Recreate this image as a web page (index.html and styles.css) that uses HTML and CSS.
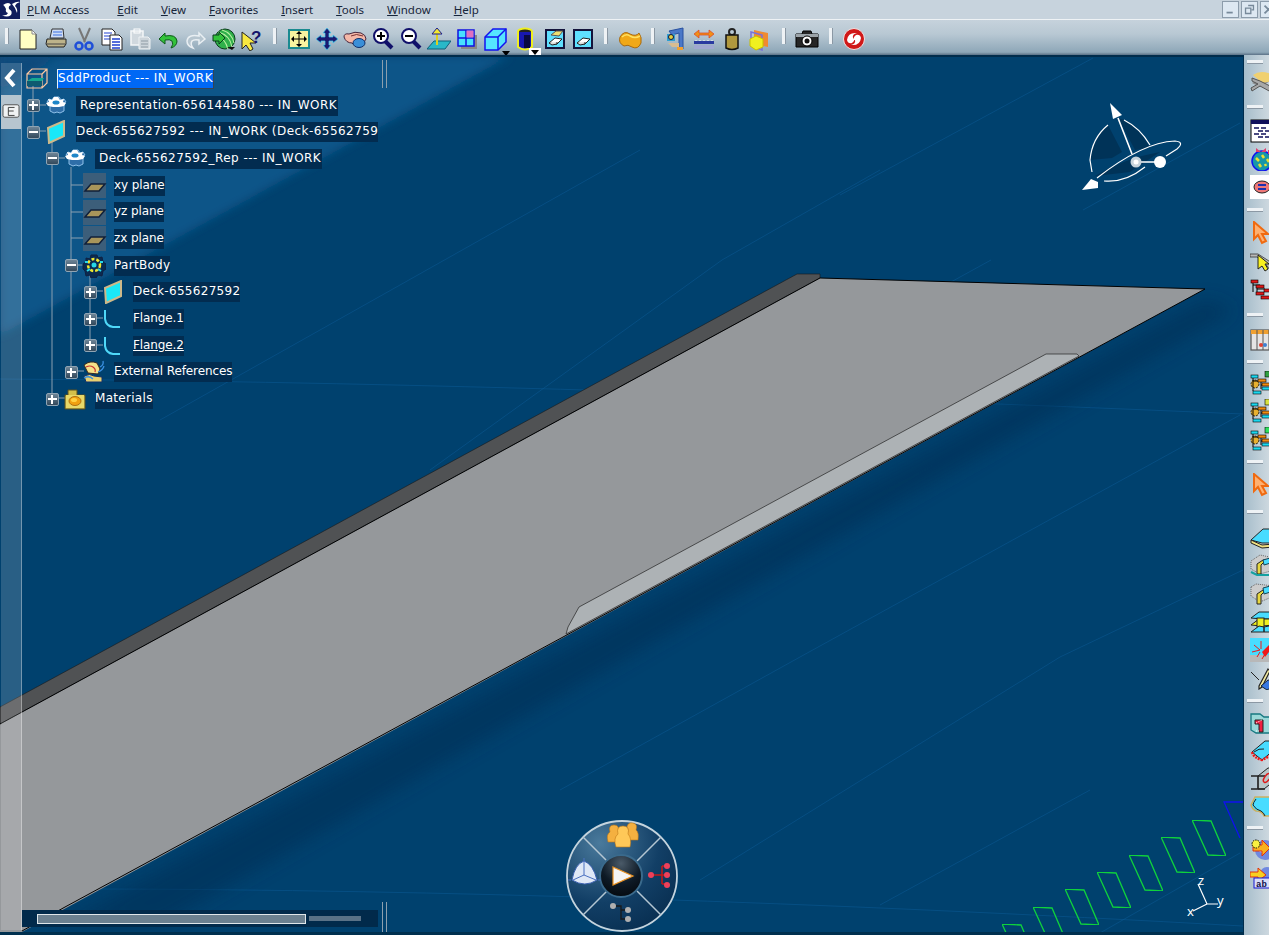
FILE: index.html
```html
<!DOCTYPE html>
<html lang="en">
<head>
  <meta charset="UTF-8" />
  <title>CATIA V6 - SddProduct</title>
  <link rel="stylesheet" href="styles.css">
</head>
<body>

  <!-- shared icons -->
  <svg class="defs" xmlns="http://www.w3.org/2000/svg">
    <symbol id="i-arrow" viewBox="0 0 24 24"><path d="M4 1v17l4-4 4 8 4-2-4-7h6z" fill="#ffb070" stroke="#f06a10" stroke-width="2"/></symbol>
    <symbol id="i-hide" viewBox="0 0 24 24"><rect x="3" y="3" width="18" height="18" fill="#5fe0ff" stroke="#14143c" stroke-width="2"/><path d="M6 16l6-5 7 1-5 5z" fill="#fff" stroke="#222"/><path d="M6 16l3 2 5-1v-2" fill="#ddd" stroke="#222"/></symbol>
    <symbol id="i-tree" viewBox="0 0 24 24"><circle cx="5" cy="13" r="4" fill="#e8b030" stroke="#222" stroke-dasharray="2 1"/><path d="M3 6v14M3 10h8M11 10v8M11 14h8" stroke="#000" fill="none"/><rect x="1" y="4" width="7" height="3" fill="#19d8f0" stroke="#000" stroke-width=".6"/><rect x="8" y="8" width="8" height="3" fill="#f08a10" stroke="#000" stroke-width=".6"/><rect x="12" y="12" width="8" height="3" fill="#f08a10" stroke="#000" stroke-width=".6"/><rect x="12" y="16" width="8" height="3" fill="#19d8f0" stroke="#000" stroke-width=".6"/><rect x="3" y="20" width="8" height="3" fill="#19d8f0" stroke="#000" stroke-width=".6"/></symbol>
    <symbol id="i-rep" viewBox="0 0 24 24"><path d="M3 8l3 1v8l4 2 3-1 3 1 4-2V9l2-1-2-3-3 1-2-3h-5L8 6 5 5z" fill="#2f6ea8" stroke="#8fc0e8"/><path d="M2 9l3-1-1-3 4 1 2-3h4l2 3 4-1-1 3 3 1-2 3-5 1h-6l-5-1z" fill="#fff"/><ellipse cx="12" cy="8.5" rx="3.5" ry="2" fill="#1f86c8"/></symbol>
    <symbol id="i-deck" viewBox="0 0 24 24"><path d="M4 8L20 1v15L5 23z" fill="#19e8f8" stroke="#cdb98a" stroke-width="2"/></symbol>
    <symbol id="i-flange" viewBox="0 0 24 24"><path d="M4 3v9q1 7 8 8h7" fill="none" stroke="#4fd8f8" stroke-width="2"/></symbol>
    <symbol id="i-plane" viewBox="0 0 24 24"><path d="M2 17l6-7h14l-6 7z" fill="#a8955a" stroke="#10203a" stroke-width="1.5"/></symbol>
    <symbol id="i-rect" viewBox="0 0 34 36"><path d="M0 0l19 1 15 35-18-1z" fill="none" stroke="#0fd23c" stroke-width="1.3"/></symbol>
  </svg>

  <div class="app">
    <div class="menubar">
      <svg class="logo" viewBox="0 0 20 19"><rect width="20" height="19" fill="#101c5c"/><path d="M3 5q6-4 8 0-3 1-2 4 4 2 2 6-4 3-9 0 5 1 6-2-3-1-2-4-2-4-3-4zM12 4q5-3 8-2-4 1-5 4 3 3 2 7-2-6-5-9z" fill="#fff"/></svg>
      <nav class="menus">
        <span><u>P</u>LM Access</span>
        <span><u>E</u>dit</span>
        <span><u>V</u>iew</span>
        <span><u>F</u>avorites</span>
        <span><u>I</u>nsert</span>
        <span><u>T</u>ools</span>
        <span><u>W</u>indow</span>
        <span><u>H</u>elp</span>
      </nav>
      <div class="winbtns">
        <span class="winbtn"><svg viewBox="0 0 17 17"><rect x="4" y="11" width="7" height="2" fill="#77899a"/></svg></span>
        <span class="winbtn"><svg viewBox="0 0 17 17"><path d="M7 4h6v5h-2M4 7h6v6H4z" fill="none" stroke="#77899a" stroke-width="1.5"/></svg></span>
        <span class="winbtn"><svg viewBox="0 0 17 17"><path d="M4 4l9 9M13 4l-9 9" stroke="#77899a" stroke-width="2"/></svg></span>
      </div>
    </div>

    <div class="toolbar">
      <span class="grip first"></span>
      <span class="tool"><svg viewBox="0 0 24 24"><path d="M4 3h12l4 4v15H4z" fill="#ffffc4" stroke="#222"/><path d="M16 3v4h4z" fill="#fff" stroke="#888"/></svg></span>
      <span class="tool"><svg viewBox="0 0 24 24"><path d="M8 2h11l1 9H6z" fill="#cfdcf5" stroke="#333"/><path d="M9 5h9M9 8h9" stroke="#3a6fe0"/><path d="M3 12h19v5l-2 3H4l-2-3z" fill="#bdb38a" stroke="#222"/><path d="M3 17h18" stroke="#444"/></svg></span>
      <span class="tool"><svg viewBox="0 0 24 24"><path d="M7 1l6 14M18 1l-6 14" stroke="#777" stroke-width="2"/><circle cx="7" cy="19" r="3.5" fill="none" stroke="#1f4fd8" stroke-width="2.5"/><circle cx="17" cy="19" r="3.5" fill="none" stroke="#1f4fd8" stroke-width="2.5"/></svg></span>
      <span class="tool"><svg viewBox="0 0 24 24"><path d="M2 2h10l3 3v13H2z" fill="#fff" stroke="#222"/><path d="M4 6h8M4 9h8M4 12h8" stroke="#2040d0"/><path d="M10 8h9l3 3v12H10z" fill="#fff" stroke="#222"/><path d="M12 12h8M12 15h8M12 18h8M12 21h8" stroke="#2040d0" stroke-width="1.3"/></svg></span>
      <span class="tool"><svg viewBox="0 0 24 24"><path d="M3 4h12v14H3z" fill="#d0d8de" stroke="#f4f6f8" stroke-width="1.5"/><rect x="6" y="2" width="6" height="4" fill="none" stroke="#fff"/><path d="M11 10h9l2 2v10H11z" fill="#ccd4da" stroke="#eef2f4"/><path d="M13 14h7M13 17h7M13 20h7" stroke="#8d9aa4"/></svg></span>
      <span class="tool"><svg viewBox="0 0 24 24"><path d="M3 12l6-6v3q11-2 12 5 0 5-6 7 3-4 1-7-2-2-7-1v4z" fill="#33c23a" stroke="#0f5a1a"/></svg></span>
      <span class="tool"><svg viewBox="0 0 24 24"><path d="M21 12l-6-6v3Q4 7 3 14q0 5 6 7-3-4-1-7 2-2 7-1v4z" fill="#b6c5cf" stroke="#e9eff3" stroke-width="1.5"/></svg></span>
      <span class="tool"><svg viewBox="0 0 24 24"><circle cx="13" cy="12" r="10" fill="#2fb04a" stroke="#0b3d1c"/><path d="M6 5q12 3 14 15M10 3q10 3 12 13M4 9q9 2 12 13" fill="none" stroke="#b8f0a0" stroke-width="1.2"/><path d="M1 8h6v-3l6 6-6 6v-3H1z" fill="#33c23a" stroke="#0b3d1c"/><path d="M15 20l5 3 3-3" fill="#111"/></svg></span>
      <span class="tool"><svg viewBox="0 0 24 24"><path d="M2 5v17l4-4 4 6 3-2-3-6h6z" fill="#f8e840" stroke="#222"/><text x="11" y="16" class="qmark">?</text></svg></span>
      <span class="grip"></span>
      <span class="tool"><svg viewBox="0 0 24 24"><rect x="2" y="3" width="20" height="18" fill="#f8f4a0" stroke="#1a8a90" stroke-width="2"/><path d="M12 5v14M5 12h14" stroke="#000"/><path d="M12 4l-3 3h6zM12 20l-3-3h6zM4 12l3-3v6zM20 12l-3-3v6z"/></svg></span>
      <span class="tool"><svg viewBox="0 0 24 24"><path d="M12 1l4 5h-2v4h4V8l5 4-5 4v-2h-4v4h2l-4 5-4-5h2v-4H6v2l-5-4 5-4v2h4V6H8z" fill="#1a1a70" stroke="#40d0f0" stroke-width=".7"/></svg></span>
      <span class="tool"><svg viewBox="0 0 24 24"><path d="M1 10q0-4 5-3 6-3 12-1 5 2 5 6l-4 6q-7 2-10-2-6 0-8-6z" fill="#f4b8a8" stroke="#43243c"/><path d="M8 9q5-3 12 0" fill="none" stroke="#7a3030"/><ellipse cx="16" cy="16" rx="6" ry="4.5" fill="#3a8fd8" stroke="#10306a"/></svg></span>
      <span class="tool"><svg viewBox="0 0 24 24"><path d="M14 14l7 7" stroke="#10106a" stroke-width="4"/><circle cx="10" cy="9" r="7" fill="#fff" stroke="#10106a" stroke-width="2"/><path d="M6 9h8M10 5v8" stroke="#000" stroke-width="2"/></svg></span>
      <span class="tool"><svg viewBox="0 0 24 24"><path d="M14 14l7 7" stroke="#10106a" stroke-width="4"/><circle cx="10" cy="9" r="7" fill="#fff" stroke="#10106a" stroke-width="2"/><path d="M6 9h8" stroke="#000" stroke-width="2"/></svg></span>
      <span class="tool"><svg viewBox="0 0 24 24"><path d="M0 22l7-8h17l-6 8z" fill="#29b8c8" stroke="#11607a"/><path d="M10 18V5" stroke="#ddd020" stroke-width="2"/><path d="M10 1l-5 6h10z" fill="#f4ea30" stroke="#1a1a90"/></svg></span>
      <span class="tool"><svg viewBox="0 0 24 24"><rect x="6" y="8" width="16" height="14" fill="#888"/><rect x="3" y="3" width="16" height="16" fill="#48e0ff" stroke="#1010e0" stroke-width="1.5"/><path d="M11 3v16M3 11h16" stroke="#1010e0" stroke-width="1.5"/><rect x="11.5" y="3.5" width="7" height="7" fill="#e070c0"/></svg></span>
      <span class="tool has-drop"><svg viewBox="0 0 24 24"><path d="M2 10l8-8h13v13l-8 8H2z" fill="#55e4ff" stroke="#1212f0" stroke-width="1.5"/><path d="M2 10h13v13M15 10l8-8" fill="none" stroke="#1212f0" stroke-width="1.5"/></svg><i class="drop"></i></span>
      <span class="tool has-drop"><svg viewBox="0 0 24 24"><ellipse cx="12" cy="4.5" rx="7" ry="3" fill="#222" stroke="#f0f020" stroke-width="2"/><path d="M5 5v15q7 5 14 0V5" fill="#1818b0" stroke="#f0f020" stroke-width="2"/><rect x="11" y="8" width="6" height="13" fill="#0a0a40"/></svg><i class="drop boxed"></i></span>
      <span class="tool"><svg viewBox="0 0 24 24"><use href="#i-hide" width="24" height="24"/><path d="M8 8l5-4h7l-4 5z" fill="#f0e070" stroke="#555"/></svg></span>
      <span class="tool"><svg viewBox="0 0 24 24"><use href="#i-hide" width="24" height="24"/></svg></span>
      <span class="grip"></span>
      <span class="tool"><svg viewBox="0 0 24 24"><path d="M2 10q4-7 10-3 6 3 9-1 3 4 2 10-3 7-9 4-4-3-8-1-6-3-4-9z" fill="#f0a818" stroke="#a86a10"/><path d="M4 10q4-4 8-1 5 3 10 0" fill="none" stroke="#ffe060" stroke-width="1.5"/></svg></span>
      <span class="grip"></span>
      <span class="tool"><svg viewBox="0 0 24 24"><path d="M5 4l14-3v21h-4V6l-7 2z" fill="#4a78c8" stroke="#2850a0"/><rect x="3" y="7" width="8" height="7" fill="#2f9fd0"/><circle cx="7" cy="10" r="2.5" fill="#e0d040" stroke="#114"/><path d="M4 16h11v4H8z" fill="#d8bc90"/><rect x="13" y="20" width="6" height="3" fill="#f0a030"/></svg></span>
      <span class="tool"><svg viewBox="0 0 24 24"><path d="M2 7l5-4v3h10V3l5 4-5 4V8H7v3z" fill="#f09018" stroke="#e04020" stroke-width=".7"/><rect x="2" y="14" width="20" height="3" fill="#2a3aa0"/><path d="M4 14v-1M8 14v-1M12 14v-1M16 14v-1M20 14v-1" stroke="#fff"/><rect x="2" y="18" width="20" height="4" fill="#a0a8d0"/></svg></span>
      <span class="tool"><svg viewBox="0 0 24 24"><circle cx="12" cy="5" r="3" fill="none" stroke="#222" stroke-width="2"/><path d="M6 8h12v13q-6 3-12 0z" fill="#b0983e" stroke="#111" stroke-width="1.5"/></svg></span>
      <span class="tool"><svg viewBox="0 0 24 24"><path d="M6 3l14 3v14l-14-3z" fill="#f08a30"/><path d="M3 5l11 3v15L3 19z" fill="none" stroke="#7a70d8" stroke-width="1.5"/><path d="M2 12l6-3 7 3v8l-7 3-6-4z" fill="#f0f020" stroke="#c8c000"/></svg></span>
      <span class="grip"></span>
      <span class="tool"><svg viewBox="0 0 24 24"><path d="M1 7h6l1-3h8l1 3h6v13H1z" fill="#262626" stroke="#000"/><rect x="1" y="7" width="22" height="3" fill="#9ba3a8"/><circle cx="12" cy="14" r="5" fill="#fff" stroke="#000"/><circle cx="12" cy="14" r="2.5" fill="#111"/></svg></span>
      <span class="grip"></span>
      <span class="tool"><svg viewBox="0 0 24 24"><circle cx="12" cy="12" r="10.5" fill="#d01818" stroke="#f0e0e0"/><path d="M5 13q1-8 10-7-5 1-4 5 3 2-1 5-4 1-5-3zM19 11q-1 8-10 7 5-1 4-5-3-2 1-5 4-1 5 3z" fill="#fff"/></svg></span>
    </div>

    <div class="workspace">
      <div class="viewport">
        <!-- 3D scene, in page coordinates -->
        <svg class="scene" viewBox="0 55 1243 880">
          <defs>
            <filter id="soft" x="-20%" y="-20%" width="140%" height="140%"><feGaussianBlur stdDeviation="9"/></filter>
            <filter id="softer" x="-20%" y="-20%" width="140%" height="140%"><feGaussianBlur stdDeviation="4"/></filter>
            <radialGradient id="wheel" cx=".3" cy=".2" r=".9"><stop offset="0" stop-color="#4a7a9c"/><stop offset=".6" stop-color="#123f66"/><stop offset="1" stop-color="#082e50"/></radialGradient>
            <radialGradient id="hub" cx=".5" cy=".2" r=".8"><stop offset="0" stop-color="#4a5a68"/><stop offset=".6" stop-color="#0e1a26"/><stop offset="1" stop-color="#050a10"/></radialGradient>
          </defs>
          <rect y="55" width="1243" height="880" fill="#00416e"/>
          <path d="M0 56H510L0 335z" fill="#0c5488" filter="url(#softer)"/>
          <path d="M0 56H60L0 90z" fill="#0a4a7a" filter="url(#softer)"/>

          <g class="faint">
            <path d="M0 379Q500 382 1243 414"/>
            <path d="M100 889Q600 890 1243 926"/>
            <path d="M430 470L722 260M722 260L880 170"/>
            <path d="M160 420L640 150"/>
            <path d="M1093 58L840 195"/>
            <path d="M991 260L700 420"/>
            <path d="M1240 415L800 657L560 790"/>
            <path d="M1243 570L1060 657L700 880"/>
            <path d="M1240 123L1083 210"/>
            <path d="M1090 790L880 905"/>
            <path d="M1240 853L1100 933"/>
          </g>

          <path d="M1205 300L1235 310L160 925L60 925z" fill="#002f55" opacity=".55" filter="url(#soft)"/>

          <path d="M0 707L797 274H820V278L0 724z" fill="#505254" stroke="#1a1a1a" stroke-width=".6"/>
          <path d="M0 724L820 278L1205 289L22 932H0z" fill="#95989b"/>
          <path d="M0 724L820 278M820 278L1205 289L65 907" fill="none" stroke="#000"/>
          <path d="M566 634L568 627L579 607L1046 354H1077L1079 356z" fill="#adb2b5" stroke="#222" stroke-width=".7"/>
          <path d="M22 931L65 907" stroke="#000"/>

          <path d="M33 86V131M52 140V398M71 167V371M90 275V345" class="branch"/>
          <path d="M39 105H46M39 131H46M58 158H65M71 185H83M71 212H83M71 238H83M77 265H84M96 291H103M96 318H103M96 345H103M77 371H84M58 398H65" class="branch"/>

          <g class="gridmarks">
            <use href="#i-rect" x="1192" y="820" width="34" height="36"/>
            <use href="#i-rect" x="1161" y="837" width="34" height="36"/>
            <use href="#i-rect" x="1129" y="855" width="34" height="36"/>
            <use href="#i-rect" x="1097" y="872" width="34" height="36"/>
            <use href="#i-rect" x="1065" y="889" width="34" height="36"/>
            <use href="#i-rect" x="1033" y="907" width="34" height="36"/>
            <use href="#i-rect" x="1002" y="924" width="34" height="36"/>
          </g>
          <path d="M1243 802H1224L1240 838" fill="none" stroke="#1010f0" stroke-width="1.3"/>

          <!-- compass -->
          <g class="compass">
            <path d="M1108 125Q1092 138 1090 160L1112 158L1122 152z" class="shade"/>
            <path d="M1124 120Q1140 128 1150 148L1135 150L1118 118z" class="shade"/>
            <path d="M1095 176Q1125 158 1160 152L1130 172z" class="shade"/>
            <path d="M1108 125Q1092 138 1090 160L1092 172"/>
            <path d="M1124 120Q1140 128 1150 145"/>
            <path d="M1097 178C1120 160 1150 142 1175 141Q1185 142 1177 149L1166 156"/>
            <path d="M1104 181Q1125 183 1145 167"/>
            <path d="M1118 118L1132 154M1136 162H1158" class="axis"/>
            <path d="M1110 103L1122 115L1113 119z" class="solid"/>
            <path d="M1082 190L1091 179L1098 182V188z" class="solid"/>
            <circle cx="1160" cy="162" r="6" class="solid"/>
            <circle cx="1136" cy="162" r="5.5" fill="#c8d4dc"/>
            <circle cx="1136" cy="162" r="2.5" fill="#fff"/>
          </g>

          <!-- axis triad -->
          <g class="triad">
            <path d="M1198 884L1207 904L1218 904M1207 904L1193 911"/>
            <text x="1198" y="885">z</text>
            <text x="1217" y="905">y</text>
            <text x="1187" y="916">x</text>
          </g>
          <path d="M101 934Q103 932 106 934z" fill="#12a84a"/>

          <!-- PLM wheel -->
          <g>
            <circle cx="622" cy="876" r="55" fill="url(#wheel)" stroke="#c4d4de" stroke-width="1.8"/>
            <path d="M583 837L607 861M661 837L637 861M583 915L607 891M661 915L637 891" stroke="#b4c6d2" stroke-width="1.5"/>
            <circle cx="621" cy="876" r="21" fill="url(#hub)" stroke="#3a6a8c" stroke-width="2"/>
            <path d="M613 867L633 876L613 885z" fill="#f4f4f4" stroke="#e89020" stroke-width="1.2"/>
            <g fill="#f4b040" stroke="#c07818" stroke-width=".6" transform="translate(0 -5)">
              <path d="M608 847q-2-8 2-10-2-7 4-7t4 7q4 2 3 10z"/>
              <path d="M626 845v-6q4-2 1-7 1-5 6-4 5 1 3 7 3 2 2 10z"/>
              <path d="M616 852q-3-9 2-13-2-8 5-8t5 8q4 4 2 13z" fill="#ffc858"/>
            </g>
            <path d="M572 880Q575 864 584 861Q593 864 597 880Q585 888 572 880z" fill="#dfe8f6" stroke="#3a60b0"/>
            <path d="M584 861V875L573 880M584 875L596 880M584 858V861M568 880H571M598 880H601" stroke="#4a70c0" fill="none"/>
            <path d="M651 875H662M662 866V884M662 866H667M662 875H667M662 884H667" stroke="#c81818" stroke-width="1.5" fill="none"/>
            <circle cx="651" cy="875" r="3" fill="#f0405a"/><circle cx="667" cy="866" r="3" fill="#f0405a"/><circle cx="667" cy="875" r="3" fill="#f0405a"/><circle cx="667" cy="885" r="3" fill="#f0405a"/>
            <path d="M613 906H621V919H628M621 910H628" stroke="#1a1a1a" stroke-width="1.3" fill="none"/>
            <circle cx="613" cy="906" r="3" fill="#b0b0b0"/><circle cx="628" cy="910" r="3" fill="#b0b0b0"/><circle cx="628" cy="919" r="3" fill="#b0b0b0"/>
          </g>

          <rect y="932" width="1243" height="3" fill="#00304f"/>
        </svg>

        <!-- panel strip on the left -->
        <div class="strip">
          <div class="strip-arrow"><svg viewBox="0 0 20 26"><path d="M13 5L6 13l7 8" fill="none" stroke="#fff" stroke-width="4"/></svg></div>
          <div class="strip-tab"><svg viewBox="0 0 20 18"><rect x="1" y="2" width="18" height="14" rx="2" fill="#f0f2f3" stroke="#444"/><path d="M7 5h7M7 5v9M7 9h6M7 14h7" fill="none" stroke="#333"/></svg></div>
        </div>

        <!-- specification tree -->
        <div class="tree">
          <div class="row root">
            <svg class="ticon" viewBox="0 0 24 24"><path d="M2 7l5-5h15v14l-5 5H2zM2 7h15v14M17 7l5-5" fill="none" stroke="#ffc8a0" stroke-width="1.2"/><path d="M2 14l5-3h12l-2 3z" fill="#17a890"/><path d="M2 14h15v5H2z" fill="#0f5a70"/></svg>
            <span class="label wide selected">SddProduct --- IN_WORK</span>
          </div>
          <div class="row d1">
            <span class="toggle plus"></span>
            <svg class="ticon"><use href="#i-rep"/></svg>
            <span class="label wide pad">Representation-656144580 --- IN_WORK</span>
          </div>
          <div class="row d1">
            <span class="toggle"></span>
            <svg class="ticon"><use href="#i-deck"/></svg>
            <span class="label wide">Deck-655627592 --- IN_WORK (Deck-65562759</span>
          </div>
          <div class="row d2">
            <span class="toggle"></span>
            <svg class="ticon"><use href="#i-rep"/></svg>
            <span class="label wide pad">Deck-655627592_Rep --- IN_WORK</span>
          </div>
          <div class="row leaf">
            <span class="planebox"><svg class="ticon"><use href="#i-plane"/></svg></span>
            <span class="label tight">xy plane</span>
          </div>
          <div class="row leaf">
            <span class="planebox"><svg class="ticon"><use href="#i-plane"/></svg></span>
            <span class="label tight">yz plane</span>
          </div>
          <div class="row leaf">
            <span class="planebox"><svg class="ticon"><use href="#i-plane"/></svg></span>
            <span class="label tight">zx plane</span>
          </div>
          <div class="row d3">
            <span class="toggle"></span>
            <svg class="ticon" viewBox="0 0 24 24"><path d="M9 1h6l1 3 4-1 1 5 3 2v5l-3 2-1 5-4-1-2 3H9l-1-3-4 1-1-5-2-2v-5l3-2 0-4 4 1z" fill="#0a2a50" stroke="#102040"/><circle cx="12" cy="11" r="6" fill="none" stroke="#f0e830" stroke-width="2.5" stroke-dasharray="3 2"/><circle cx="12" cy="11" r="2.5" fill="#25d8e8"/><path d="M3 8h3M18 8h3M5 17l3-2M19 17l-3-2" stroke="#25d8e8" stroke-width="2"/></svg>
            <span class="label">PartBody</span>
          </div>
          <div class="row d4">
            <span class="toggle plus"></span>
            <svg class="ticon"><use href="#i-deck"/></svg>
            <span class="label">Deck-655627592</span>
          </div>
          <div class="row d4">
            <span class="toggle plus"></span>
            <svg class="ticon"><use href="#i-flange"/></svg>
            <span class="label tight">Flange.1</span>
          </div>
          <div class="row d4">
            <span class="toggle plus"></span>
            <svg class="ticon"><use href="#i-flange"/></svg>
            <span class="label tight"><u>Flange.2</u></span>
          </div>
          <div class="row d3">
            <span class="toggle plus"></span>
            <svg class="ticon" viewBox="0 0 24 24"><path d="M2 5q6-5 13-2l3 6-2 5-10-1z" fill="#f4e088" stroke="#3a2a20"/><path d="M4 7q4-2 7 0 3 2 2 5" fill="none" stroke="#c83030" stroke-width="1.2"/><path d="M2 16q6-3 10 0l8 1v5H4z" fill="#e8d070" stroke="#10306a"/><path d="M2 18q5-3 9 1M18 7q4-2 3-6M16 12q5-2 6-6" fill="none" stroke="#3a90e0" stroke-width="1.3"/></svg>
            <span class="label tight">External References</span>
          </div>
          <div class="row d2">
            <span class="toggle plus"></span>
            <svg class="ticon" viewBox="0 0 24 24"><path d="M2 8h3V3h9v5h8v14H2z" fill="#d4c04a" stroke="#5a5020"/><rect x="3" y="8" width="18" height="13" fill="#e8d868"/><ellipse cx="12" cy="14" rx="6" ry="4.5" fill="#f0a010" stroke="#b07010"/><ellipse cx="11" cy="13" rx="3" ry="2" fill="#ffd040"/></svg>
            <span class="label">Materials</span>
          </div>
        </div>

        <div class="hscroll">
          <div class="hscroll-thumb"></div>
          <div class="hscroll-rest"></div>
        </div>
        <div class="sash sash-top"></div>
        <div class="sash sash-bottom"></div>
      </div>

      <aside class="sidebar">
        <span class="vgrip h14"></span>
        <span class="vtool"><svg viewBox="0 0 24 24"><path d="M2 12L16 4l8 4-14 8z" fill="#8a8a8a"/><path d="M3 4q8-6 20 0v6L12 12z" fill="#f0d070"/><path d="M2 7l8 3 14 7-3 4-11-6-8 5-1-3 7-4-6-3z" fill="#a8a8a8" stroke="#555"/></svg></span>
        <span class="vgrip h20"></span>
        <span class="vtool"><svg viewBox="0 0 24 24"><rect x="1" y="1" width="23" height="22" fill="#fff" stroke="#000"/><rect x="1" y="1" width="23" height="4" fill="#10105a"/><path d="M4 9h14M8 12h14M4 15h14M8 18h14" stroke="#10105a" stroke-width="1.4" stroke-dasharray="5 2"/></svg></span>
        <span class="vtool"><svg viewBox="0 0 24 24"><circle cx="12" cy="14" r="10" fill="#1898a8" stroke="#1010f0" stroke-width="1.5"/><path d="M6 11l3 3M12 8l2 3M17 12l2 3M9 17l2 3M15 17l1 2" stroke="#f0e030" stroke-width="2.5"/><path d="M6 1l5 4 5-4v4H6zM18 3h6v4h-6z" fill="#e04070"/></svg></span>
        <span class="vtool"><svg viewBox="0 0 24 24"><rect width="24" height="24" fill="#fff"/><ellipse cx="12" cy="12" rx="8" ry="6" fill="#f07878" stroke="#222"/><path d="M8 10h8M8 14h8" stroke="#2030b0" stroke-width="2"/></svg></span>
        <span class="vgrip h18"></span>
        <span class="vtool"><svg><use href="#i-arrow"/></svg></span>
        <span class="vtool"><svg viewBox="0 0 24 24"><path d="M0 5h8l14 9 2 5-4 2-6-8-7-5H0z" fill="#b8b8b8" stroke="#333" stroke-width=".8"/><path d="M8 6v14l4-3 3 5 3-2-3-5h4z" fill="#f8f020" stroke="#222"/></svg></span>
        <span class="vtool"><svg viewBox="0 0 24 24"><path d="M3 5v10M3 8h7M7 8v10M7 12h8M7 16h7" fill="none" stroke="#000"/><rect x="1" y="3" width="7" height="3" fill="#e01818" stroke="#000" stroke-width=".6"/><rect x="6" y="8" width="8" height="3" fill="#e01818" stroke="#000" stroke-width=".6"/><rect x="14" y="12" width="10" height="3" fill="#e01818" stroke="#000" stroke-width=".6"/><rect x="6" y="15" width="8" height="3" fill="#e01818" stroke="#000" stroke-width=".6"/><rect x="11" y="19" width="10" height="3" fill="#e01818" stroke="#000" stroke-width=".6"/></svg></span>
        <span class="vgrip h23"></span>
        <span class="vtool"><svg viewBox="0 0 24 24"><rect x="1" y="2" width="23" height="20" fill="#e4e4e4" stroke="#555" stroke-width="1.2"/><rect x="1" y="2" width="23" height="4" fill="#f0a030"/><path d="M7 2v20M13 2v20M19 2v20" stroke="#555"/><circle cx="11" cy="17" r="2" fill="#e04030"/><circle cx="15" cy="17" r="2" fill="#4080d0"/></svg></span>
        <span class="vgrip h15"></span>
        <span class="vtool"><svg><use href="#i-tree"/><rect x="15" y="0" width="9" height="6" fill="#30a040" stroke="#000" stroke-width=".6"/></svg></span>
        <span class="vtool"><svg><use href="#i-tree"/><rect x="15" y="0" width="9" height="6" fill="#d8e040" stroke="#000" stroke-width=".6"/></svg></span>
        <span class="vtool"><svg><use href="#i-tree"/><rect x="15" y="0" width="9" height="6" fill="#30e060" stroke="#000" stroke-width=".6"/></svg></span>
        <span class="vgrip h18"></span>
        <span class="vtool"><svg><use href="#i-arrow"/></svg></span>
        <span class="vgrip h25"></span>
        <span class="vtool"><svg viewBox="0 0 24 24"><path d="M1 14L13 3h11v14H12z" fill="#48dcff" stroke="#222"/><path d="M1 14l11 5 12-1v3l-12 1-11-5z" fill="#f0e080" stroke="#222"/></svg></span>
        <span class="vtool"><svg viewBox="0 0 24 24"><path d="M1 7l9-6 14 3v12L10 20 1 15z" fill="#ccc" stroke="#666" stroke-dasharray="1 1"/><path d="M7 20V10l6-4h3l-5 5v9z" fill="#e8d840" stroke="#222"/><path d="M1 18l6 3h12l5-3" stroke="#14a0a0" fill="none" stroke-width="2"/><path d="M13 6l11-3v5l-10 3z" fill="#48dcff" stroke="#145"/></svg></span>
        <span class="vtool"><svg viewBox="0 0 24 24"><path d="M1 5l5-3 18 2v10L10 20 1 14z" fill="#ccc" stroke="#666" stroke-dasharray="1 1"/><path d="M7 22V12l6-4h3l-5 5v9z" fill="#e8d840" stroke="#222"/><path d="M13 6l11-3v6l-10 3z" fill="#48dcff" stroke="#145"/></svg></span>
        <span class="vtool"><svg viewBox="0 0 24 24"><path d="M1 8l8-6h15v7H12z" fill="#48dcff" stroke="#222"/><path d="M1 15l8-6h15v6l-12 1z" fill="#f0f020" stroke="#222"/><rect x="7" y="8" width="7" height="9" fill="#f0f020" stroke="#222"/><path d="M1 22l8-6 5 1v5H1zM14 17l10-2v7H14z" fill="#48dcff" stroke="#222"/></svg></span>
        <span class="vtool"><svg viewBox="0 0 24 24"><rect width="24" height="24" fill="#48dcff"/><path d="M0 17h24v7H0z" fill="#b8b8b8"/><path d="M12 14L24 2v6L15 19z" fill="#f01818"/><path d="M4 7l6 5M2 14l8-2M11 3v8M15 16l-3 5M7 19l3-5" stroke="#f01818"/></svg></span>
        <span class="vtool"><svg viewBox="0 0 24 24"><path d="M9 20L18 3l2 2-8 16-3 2z" fill="#f0e8a0" stroke="#222" stroke-width="1.2"/><path d="M1 6l8 8" stroke="#222"/><path d="M11 20l7-6 6 1v5l-7 4z" fill="#3878e0" stroke="#123"/></svg></span>
        <span class="vgrip h17"></span>
        <span class="vtool"><svg viewBox="0 0 24 24"><path d="M1 3h9l4 3h10v16H6l-5-3z" fill="#9ad8d8" stroke="#167880" stroke-width="1.3"/><path d="M5 9h8v12H9v-8H5z" fill="#f02040" stroke="#222"/><path d="M6 12l6-3M6 20h4" stroke="#fff" stroke-dasharray="1 1"/></svg></span>
        <span class="vtool"><svg viewBox="0 0 24 24"><path d="M2 13L15 2h9v9L12 21z" fill="#48dcff" stroke="#222"/><path d="M2 13q2 6 10 8l12-6" fill="none" stroke="#f01818" stroke-width="2.5" stroke-dasharray="2 1"/><path d="M4 13q5-4 10-3" fill="none" stroke="#222"/></svg></span>
        <span class="vtool"><svg viewBox="0 0 24 24"><path d="M8 9l10-8h6v13L14 22H8z" fill="#b8c6c8" stroke="#222"/><path d="M1 9h14M1 22h14M8 9v13" stroke="#222" stroke-width="1.3" fill="none"/><ellipse cx="17" cy="11" rx="2.5" ry="5" transform="rotate(35 17 11)" fill="none" stroke="#e01818" stroke-width="1.5"/></svg></span>
        <span class="vtool"><svg viewBox="0 0 24 24"><path d="M5 2H24V21H14q-2-5-8-5-4-2-5-6z" fill="#48dcff" stroke="#cdb060" stroke-width="1.5"/><path d="M6 4Q3 8 3 10q3 5 8 6 3 2 4 5" fill="none" stroke="#222"/></svg></span>
        <span class="vgrip h14"></span>
        <span class="vtool"><svg viewBox="0 0 24 24"><circle cx="15" cy="13" r="10" fill="#7088e0"/><circle cx="13" cy="11" r="5" fill="#c8d0f4"/><path d="M3 8h9V3l8 8-8 8v-5H3z" fill="#f8b020" stroke="#e03010"/><circle cx="6" cy="7" r="4" fill="#f8f040" stroke="#000" stroke-dasharray="1.5 1"/></svg></span>
        <span class="vtool"><svg viewBox="0 0 24 24"><circle cx="17" cy="9" r="7" fill="#7088e0"/><path d="M0 7h8V3l8 7-8 6v-4H0z" fill="#f8d020" stroke="#e03010"/><rect x="4" y="13" width="22" height="10" fill="#d8dcf8" stroke="#1818d0"/><text x="6" y="21.5" class="ab">ab</text></svg></span>
      </aside>
    </div>
  </div>

</body>
</html>
```

FILE: styles.css
```css
* { box-sizing: border-box; }
html, body { margin: 0; height: 100%; overflow: hidden; }
body { font-family: "Noto Sans", sans-serif; background: #00416e; }
.defs { position: absolute; width: 0; height: 0; }

.app {
  display: flex;
  flex-direction: column;
  height: 935px;
}

/* menu bar */
.menubar {
  display: flex;
  align-items: center;
  height: 20px;
  flex: none;
  background: #c7d3dd;
  border-bottom: 1px solid #eef2f5;
}
.logo { width: 20px; height: 19px; flex: none; }
.menus {
  display: flex;
  gap: 23px;
  margin-left: 7px;
  font-size: 11.5px;
  color: #17253a;
}
.menus span:first-child { margin-right: 5px; }
.winbtns { display: flex; gap: 2px; margin-left: auto; margin-right: -8px; align-self: flex-start; margin-top: 1px; }
.winbtn {
  display: block;
  width: 17px;
  height: 17px;
  background: #dde8f2;
  border: 1px solid #8c9cab;
}
.winbtn svg { display: block; width: 15px; height: 15px; }

/* top toolbar */
.toolbar {
  display: flex;
  align-items: center;
  height: 35px;
  flex: none;
  background: linear-gradient(#c6d2dc, #b8c8d3 40%, #8ea7b8 92%, #5a7186);
}
.tool {
  position: relative;
  display: flex;
  align-items: center;
  justify-content: center;
  width: 28px;
  height: 28px;
  flex: none;
  margin-top: 2px;
}
.tool svg { width: 24px; height: 24px; }
.has-drop { margin-right: 2px; }
.grip { width: 18.8px; flex: none; height: 16px; margin-bottom: 3px; display: flex; justify-content: center; }
.grip::before { content: ""; width: 3px; background: #eef2f5; border-right: 1px solid #8b98a4; }
.grip.first { width: 14px; justify-content: flex-start; padding-left: 5px; }
.drop { position: absolute; right: -1px; bottom: -3px; width: 0; height: 0; border: 4px solid transparent; border-top: 5px solid #000; border-bottom: 0; }
.drop.boxed { outline: 2px solid #fff; right: 0; bottom: -2px; background: #fff; }
.qmark { font: bold 17px "Liberation Sans", sans-serif; fill: #14146a; }
.ab { font: bold 9px "Liberation Mono", monospace; fill: #10104a; }

.workspace { display: flex; flex: 1; min-height: 0; }

/* 3D view */
.viewport {
  position: relative;
  flex: 1;
  overflow: hidden;
}
.scene { position: absolute; left: 0; top: 0; width: 1243px; height: 880px; display: block; }
.faint path { fill: none; stroke: #0b5c98; stroke-width: 1; opacity: .5; }
.branch { fill: none; stroke: #8ba0b0; stroke-width: 1; }
.compass path { fill: none; stroke: #fff; stroke-width: 1.2; }
.compass .shade { fill: #003358; stroke: none; }
.compass .axis { stroke-width: 1.6; }
.compass .solid { fill: #fff; stroke: none; }
.triad path { fill: none; stroke: #fff; stroke-width: 1.2; }
.triad text { font: 13px "Noto Sans", sans-serif; fill: #fff; }

.viewport::before {
  content: "";
  position: absolute;
  left: 0;
  right: 0;
  top: 0;
  height: 2px;
  background: #002c4c;
  z-index: 1;
}

.strip {
  position: absolute;
  left: 1px;
  top: 8px;
  width: 21px;
  height: 867px;
  background: rgba(255, 255, 255, .16);
  border-right: 1px solid rgba(255, 255, 255, .35);
}
.strip-arrow { height: 30px; }
.strip-arrow svg { display: block; width: 20px; height: 26px; margin-top: 2px; }
.strip-tab { height: 34px; background: #b7c5cf; padding: 8px 0 0 1px; }
.strip-tab svg { display: block; width: 18px; height: 16px; }

/* tree */
.tree {
  position: absolute;
  left: 0;
  top: 10.5px;
  width: 378px;
  font-family: "DejaVu Sans", sans-serif;
  font-size: 12px;
  color: #fff;
}
.row {
  display: flex;
  align-items: center;
  height: 26.7px;
  white-space: nowrap;
}
.root { padding-left: 25px; }
.d1 { padding-left: 27px; }
.d2 { padding-left: 46px; }
.d3 { padding-left: 65px; }
.d4 { padding-left: 84px; }
.leaf { padding-left: 83px; }
.toggle {
  position: relative;
  width: 13px;
  height: 13px;
  flex: none;
  margin-right: 4px;
  background: linear-gradient(#6d8496, #33495c);
  border: 1px solid #90a4b3;
  border-radius: 2px;
}
.toggle::before { content: ""; position: absolute; left: 1px; right: 1px; top: 4px; height: 2px; background: #fff; }
.plus::after { content: ""; position: absolute; top: 1px; bottom: 1px; left: 4px; width: 2px; background: #fff; }
.ticon { width: 24px; height: 24px; flex: none; }
.planebox { display: flex; width: 23px; height: 25px; background: #3c5e7a; flex: none; align-items: center; }
.label {
  margin-left: 8px;
  min-width: 0;
  height: 20px;
  line-height: 19px;
  background: #022c50;
  letter-spacing: .3px;
}
.wide { letter-spacing: .45px; }
.tight { letter-spacing: -.1px; }
.pad { padding: 0 1px 0 4px; }
.selected { background: #0068f5; border: 1px solid #eaf1f8; border-right-color: #345; border-bottom-color: #345; line-height: 17px; }

/* tree scroller */
.hscroll {
  position: absolute;
  left: 22px;
  top: 855px;
  width: 356px;
  height: 17px;
  display: flex;
  align-items: center;
  padding-left: 15px;
  background: #012a4b;
}
.hscroll-thumb { width: 269px; height: 10px; background: #6b8090; border: 1px solid #dfe6ea; }
.hscroll-rest { width: 52px; height: 5px; margin-left: 3px; background: #5a7287; }
.sash { position: absolute; left: 382px; width: 5px; border-left: 1px solid #8c9fae; border-right: 1px solid #8c9fae; }
.sash-top { top: 5px; height: 28px; }
.sash-bottom { top: 847px; height: 30px; }

/* right toolbar */
.sidebar {
  display: flex;
  flex-direction: column;
  width: 26px;
  flex: none;
  overflow: hidden;
  border-left: 1px solid #002c4c;
  background: linear-gradient(90deg, #a6bdcb, #cdd8df);
}
.vtool { display: flex; align-items: center; height: 28px; flex: none; padding-left: 6px; }
.vtool svg { width: 24px; height: 24px; flex: none; }
.vgrip { display: flex; align-items: center; flex: none; padding-left: 3px; }
.vgrip::before { content: ""; width: 16px; height: 3px; background: #eef2f5; border-bottom: 1px solid #8b98a4; }
.h14 { height: 14px; }
.h15 { height: 15px; }
.h17 { height: 17px; }
.h18 { height: 18px; }
.h20 { height: 20px; }
.h23 { height: 23px; }
.h25 { height: 25px; }
```
